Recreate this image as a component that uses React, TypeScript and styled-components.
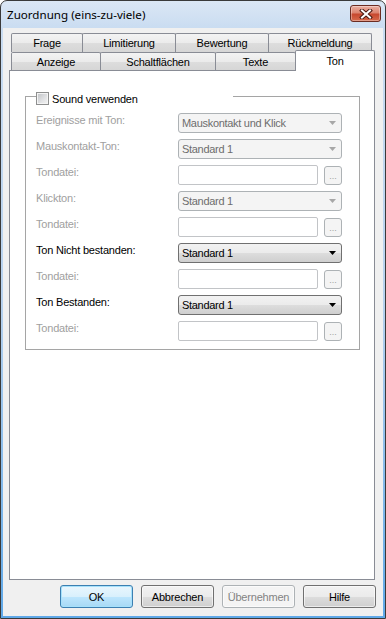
import styled, { createGlobalStyle } from 'styled-components'

const GlobalStyle = createGlobalStyle`
  html, body {
    margin: 0;
    padding: 0;
    background: #ffffff;
  }
  body {
    font-family: "Liberation Sans", Arial, sans-serif;
    font-size: 11px;
    color: #000000;
  }
  * {
    box-sizing: border-box;
  }
`

type Row =
  | { kind: 'combo'; label: string; value: string; enabled?: boolean }
  | { kind: 'file'; label: string }

const rows: Row[] = [
  { kind: 'combo', label: 'Ereignisse mit Ton:', value: 'Mauskontakt und Klick' },
  { kind: 'combo', label: 'Mauskontakt-Ton:', value: 'Standard 1' },
  { kind: 'file', label: 'Tondatei:' },
  { kind: 'combo', label: 'Klickton:', value: 'Standard 1' },
  { kind: 'file', label: 'Tondatei:' },
  { kind: 'combo', label: 'Ton Nicht bestanden:', value: 'Standard 1', enabled: true },
  { kind: 'file', label: 'Tondatei:' },
  { kind: 'combo', label: 'Ton Bestanden:', value: 'Standard 1', enabled: true },
  { kind: 'file', label: 'Tondatei:' },
]

const backTabs = [
  { label: 'Frage', width: 72 },
  { label: 'Limitierung', width: 94 },
  { label: 'Bewertung', width: 94 },
  { label: 'Rückmeldung', width: 104 },
]

const frontTabs = [
  { label: 'Anzeige', width: 90 },
  { label: 'Schaltflächen', width: 116 },
  { label: 'Texte', width: 81 },
  { label: 'Ton', width: 80, selected: true },
]

function Arrow({ enabled }: { enabled?: boolean }) {
  return (
    <ArrowIcon width="7" height="4" viewBox="0 0 7 4">
      <path d="M0 0H7L3.5 4Z" fill={enabled ? '#000000' : '#a7a7a7'} />
    </ArrowIcon>
  )
}

export default function App() {
  return (
    <>
      <GlobalStyle />
      <Window>
        <TitleBar>
          <Title>Zuordnung (eins-zu-viele)</Title>
          <CloseButton>
            <svg width="14" height="10" viewBox="0 0 14 10">
              <path d="M3 1.5L11 8.5M11 1.5L3 8.5" stroke="#4a1a12" strokeWidth="4" strokeLinecap="square" />
              <path d="M3 1.5L11 8.5M11 1.5L3 8.5" stroke="#ffffff" strokeWidth="2" strokeLinecap="square" />
            </svg>
          </CloseButton>
        </TitleBar>

        <Client>
          <TabStrip>
            <TabRow>
              {backTabs.map((t) => (
                <Tab key={t.label} $width={t.width}>
                  {t.label}
                </Tab>
              ))}
            </TabRow>
            <TabRow $front>
              {frontTabs.map((t) => (
                <Tab key={t.label} $width={t.width} $selected={t.selected} $front>
                  {t.label}
                </Tab>
              ))}
            </TabRow>
          </TabStrip>

          <TabPanel>
            <GroupBox>
              <Legend>
                <CheckBox />
                <span>Sound verwenden</span>
              </Legend>
              <FieldGrid>
                {rows.map((row, i) => (
                  <FieldRow key={i}>
                    <FieldLabel $enabled={row.kind === 'combo' && row.enabled}>{row.label}</FieldLabel>
                    {row.kind === 'combo' ? (
                      <Combo $enabled={row.enabled}>
                        <ComboText>{row.value}</ComboText>
                        <Arrow enabled={row.enabled} />
                      </Combo>
                    ) : (
                      <FileControl>
                        <TextBox />
                        <BrowseButton>...</BrowseButton>
                      </FileControl>
                    )}
                  </FieldRow>
                ))}
              </FieldGrid>
            </GroupBox>
          </TabPanel>

          <ButtonRow>
            <DialogButton $variant="default">OK</DialogButton>
            <DialogButton>Abbrechen</DialogButton>
            <DialogButton $variant="disabled">Übernehmen</DialogButton>
            <DialogButton>Hilfe</DialogButton>
          </ButtonRow>
        </Client>
      </Window>
    </>
  )
}

const Window = styled.div`
  width: 386px;
  height: 619px;
  display: flex;
  flex-direction: column;
  border: 1px solid #3a3a3a;
  border-radius: 7px 7px 0 0;
  padding: 0 2px 2px 2px;
  background: linear-gradient(to bottom, #dbe7f5 0px, #c9dcf1 28px, #b7d2ef 300px, #5fa8e8 619px);
  overflow: hidden;
`

const TitleBar = styled.div`
  height: 27px;
  display: flex;
  justify-content: space-between;
  align-items: flex-start;
  padding: 0 2px 0 4px;
`

const Title = styled.div`
  align-self: center;
  font-family: "Noto Sans", "Open Sans", sans-serif;
  font-size: 11.6px;
  color: #000000;
  padding-bottom: 1px;
`

const CloseButton = styled.div`
  margin-top: 4px;
  width: 31px;
  height: 17px;
  display: flex;
  align-items: center;
  justify-content: center;
  border: 1px solid #6b2c22;
  border-radius: 3px;
  background: linear-gradient(to bottom, #eab0a2 0%, #dc8470 45%, #c7482f 55%, #d66a4c 100%);
  box-shadow: inset 0 0 0 1px rgba(255, 255, 255, 0.35);
`

const Client = styled.div`
  flex: 1;
  display: flex;
  flex-direction: column;
  background: #f0f0f0;
  padding: 5px 8px 8px 6px;
`

const TabStrip = styled.div`
  display: flex;
  flex-direction: column;
  padding-left: 2px;
`

const TabRow = styled.div<{ $front?: boolean }>`
  display: flex;
  height: ${({ $front }) => ($front ? '18px' : '19px')};
`

const Tab = styled.div<{ $width: number; $selected?: boolean; $front?: boolean }>`
  width: ${({ $width }) => $width}px;
  height: ${({ $selected, $front }) => ($selected ? '21px' : $front ? '18px' : '19px')};
  margin-top: ${({ $selected }) => ($selected ? '-2px' : '0')};
  margin-bottom: ${({ $selected }) => ($selected ? '-1px' : '0')};
  position: ${({ $selected }) => ($selected ? 'relative' : 'static')};
  z-index: ${({ $selected }) => ($selected ? 1 : 'auto')};
  display: flex;
  align-items: center;
  justify-content: center;
  padding-bottom: ${({ $selected }) => ($selected ? '1px' : '0')};
  border: 1px solid #898c95;
  border-bottom: none;
  border-radius: 2px 2px 0 0;
  background: ${({ $selected }) =>
    $selected ? '#ffffff' : 'linear-gradient(to bottom, #f3f3f3 0%, #ebebeb 50%, #dddddd 51%, #d6d6d6 100%)'};
  color: #000000;
  font-size: 11px;
  letter-spacing: -0.2px;
  & + & {
    margin-left: -1px;
  }
`

const TabPanel = styled.div`
  flex: 1;
  border: 1px solid #898c95;
  background: #ffffff;
  padding: 17px 15px 0 15px;
`

const GroupBox = styled.fieldset`
  margin: 0;
  width: 335px;
  border: 1px solid #a5a5a5;
  padding: 8px 16px 8px 10px;
  min-width: 0;
`

const Legend = styled.legend`
  width: 197px;
  padding: 4px 0 0 0;
  display: flex;
  align-items: center;
  gap: 3px;
  background: #ffffff;
  font-size: 11px;
  letter-spacing: -0.2px;
  color: #000000;
`

const CheckBox = styled.span`
  width: 13px;
  height: 13px;
  flex: none;
  border: 1px solid #8e8f8f;
  background: linear-gradient(135deg, #bfc2c5 0%, #e2e3e5 60%, #f4f4f4 100%);
  box-shadow: inset 0 0 0 1px #f4f4f4;
`

const FieldGrid = styled.div`
  display: flex;
  flex-direction: column;
  gap: 6px;
`

const FieldRow = styled.div`
  display: grid;
  grid-template-columns: 142px 164px;
  height: 20px;
`

const FieldLabel = styled.div<{ $enabled?: boolean }>`
  align-self: start;
  padding-top: 1px;
  line-height: 13px;
  letter-spacing: -0.2px;
  color: ${({ $enabled }) => ($enabled ? '#000000' : '#a0a0a0')};
`

const Combo = styled.div<{ $enabled?: boolean }>`
  height: 20px;
  display: flex;
  align-items: center;
  padding: 0 5px 0 3px;
  border: 1px solid ${({ $enabled }) => ($enabled ? '#707070' : '#adb2b5')};
  border-radius: 3px;
  background: ${({ $enabled }) =>
    $enabled ? 'linear-gradient(to bottom, #f2f2f2 0%, #ebebeb 50%, #dddddd 51%, #cfcfcf 100%)' : '#f4f4f4'};
  color: ${({ $enabled }) => ($enabled ? '#000000' : '#6d6d6d')};
`

const ComboText = styled.span`
  flex: 1;
  letter-spacing: -0.3px;
  white-space: nowrap;
`

const ArrowIcon = styled.svg`
  flex: none;
  display: block;
`

const FileControl = styled.div`
  display: flex;
  align-items: center;
  gap: 6px;
`

const TextBox = styled.div`
  width: 140px;
  height: 20px;
  border: 1px solid #c2c4c7;
  border-radius: 2px;
  background: #ffffff;
`

const BrowseButton = styled.div`
  width: 18px;
  height: 19px;
  display: flex;
  align-items: flex-end;
  justify-content: center;
  padding-bottom: 3px;
  border: 1px solid #adb2b5;
  border-radius: 3px;
  background: #f4f4f4;
  color: #a0a0a0;
  font-size: 9px;
  line-height: 9px;
`

const ButtonRow = styled.div`
  display: flex;
  justify-content: flex-end;
  gap: 8px;
  margin: 5px -1px 0 0;
`

const DialogButton = styled.div<{ $variant?: 'default' | 'disabled' }>`
  width: 73px;
  height: 23px;
  display: flex;
  align-items: center;
  justify-content: center;
  border-radius: 3px;
  font-size: 11px;
  letter-spacing: -0.2px;
  border: 1px solid
    ${({ $variant }) => ($variant === 'default' ? '#3c7fb1' : $variant === 'disabled' ? '#adb2b5' : '#707070')};
  background: ${({ $variant }) =>
    $variant === 'default'
      ? 'linear-gradient(to bottom, #eaf6fd 0%, #d9f0fc 50%, #bee6fd 51%, #a7d9f5 100%)'
      : $variant === 'disabled'
        ? '#f4f4f4'
        : 'linear-gradient(to bottom, #f2f2f2 0%, #ebebeb 50%, #dddddd 51%, #cfcfcf 100%)'};
  box-shadow: ${({ $variant }) => ($variant === 'default' ? 'inset 0 0 0 1px #a6e1fb' : 'inset 0 0 0 1px rgba(255,255,255,0.6)')};
  color: ${({ $variant }) => ($variant === 'disabled' ? '#838383' : '#000000')};
`
